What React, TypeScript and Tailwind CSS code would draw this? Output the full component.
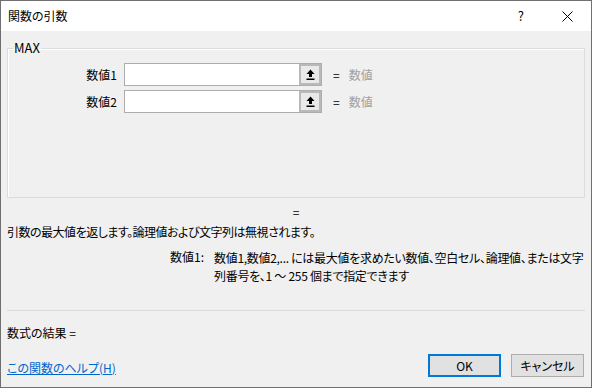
const font = "font-['Meiryo_UI','Noto_Sans_CJK_JP',sans-serif] [font-feature-settings:'palt']"

const RefButton = () => (
  <div className="flex h-full w-[22px] items-center justify-center border-2 border-[#b9b9b9] bg-[#e9e9e9]">
    <svg width="9" height="11" viewBox="0 0 9 11">
      <path d="M4.5 0.5 L8.5 5 L6 5 L6 8 L3 8 L3 5 L0.5 5 Z" fill="#000" />
      <rect x="0.5" y="9.5" width="8" height="1.5" fill="#000" />
    </svg>
  </div>
)

const ArgRow = ({ label }: { label: string }) => (
  <div className="flex h-[23px] items-center">
    <div className="w-[110px] pr-[1px] text-right">{label}</div>
    <div className="ml-[6px] flex h-[23px] w-[198px] border border-[#adadad] bg-white">
      <div className="flex-1" />
      <RefButton />
    </div>
    <span className="ml-[11px]">=</span>
    <span className="ml-[9px] text-[#a0a0a0]">数値</span>
  </div>
)

export default function App() {
  return (
    <div className={`flex h-[388px] w-[592px] flex-col border border-[#707070] bg-[#f0f0f0] text-[12px] leading-[16px] text-black ${font}`}>
      <div className="flex h-[30px] shrink-0 items-center bg-white pl-[7px]">
        <span>関数の引数</span>
        <span className="ml-auto mr-[38px] text-[13px]">?</span>
        <svg className="mr-[18px]" width="11" height="11" viewBox="0 0 11 11">
          <path d="M0.5 0.5 L10.5 10.5 M10.5 0.5 L0.5 10.5" stroke="#000" strokeWidth="1" />
        </svg>
      </div>

      <div className="flex flex-1 flex-col px-[6px]">
        <fieldset className="mt-[9px] h-[158px] border border-[#dcdcdc] shadow-[inset_1px_1px_0_#ffffff]">
          <legend className="ml-[5px] px-[1px] text-[13px]">MAX</legend>
          <div className="mt-[7px] flex flex-col gap-[4px]">
            <ArgRow label="数値1" />
            <ArgRow label="数値2" />
          </div>
        </fieldset>

        <div className="mt-[6px] text-center">=</div>
        <div className="mt-[4px] tracking-[-0.5px]">引数の最大値を返します。論理値および文字列は無視されます。</div>

        <div className="mt-[9px] flex">
          <div className="w-[163px] shrink-0" />
          <div className="w-[44px] shrink-0">数値1:</div>
          <div className="leading-[18px] tracking-[-0.3px]">
            数値1,数値2,... には最大値を求めたい数値、空白セル、論理値、または文字
            <br />
            列番号を、1 ～ 255 個まで指定できます
          </div>
        </div>

        <div className="mt-[25px] h-px bg-[#dcdcdc]" />
        <div className="mt-[14px]">数式の結果 =</div>

        <div className="mt-[13px] flex items-center">
          <a href="#" className="mt-[4px] text-[#0066cc] underline">この関数のヘルプ(H)</a>
          <button className="ml-auto h-[23px] w-[73px] border-2 border-[#0078d7] bg-[#e1e1e1]">OK</button>
          <button className="ml-[10px] mr-[1px] h-[23px] w-[73px] border border-[#adadad] bg-[#e1e1e1]">キャンセル</button>
        </div>
      </div>
    </div>
  )
}
